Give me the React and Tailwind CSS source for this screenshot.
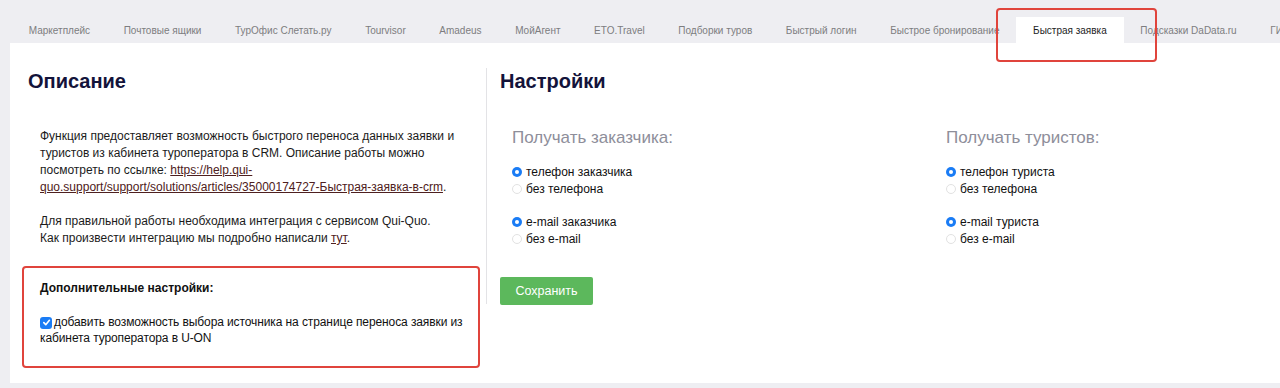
import React from "react";

const tabs = [
  { t: "Маркетплейс" },
  { t: "Почтовые ящики" },
  { t: "ТурОфис Слетать.ру" },
  { t: "Tourvisor" },
  { t: "Amadeus" },
  { t: "МойАгент" },
  { t: "ETO.Travel" },
  { t: "Подборки туров" },
  { t: "Быстрый логин" },
  { t: "Быстрое бронирование" },
  { t: "Быстрая заявка", active: true },
  { t: "Подсказки DaData.ru" },
  { t: "ГИБДД" },
];

function Radio({ checked, label }) {
  return (
    <div className="flex items-center h-[17px]">
      {checked ? (
        <span className="w-[10px] h-[10px] rounded-full bg-[#1a7cf5] flex items-center justify-center mr-[4px]">
          <span className="w-[4px] h-[4px] rounded-full bg-white" />
        </span>
      ) : (
        <span className="w-[10px] h-[10px] rounded-full border border-[#e2e2e2] bg-white mr-[4px]" />
      )}
      <span>{label}</span>
    </div>
  );
}

function Group({ title, a, b, c, d }) {
  return (
    <div className="w-[434px]">
      <div className="text-[17px] leading-[20px] text-[#8e8e9a] h-[20px]">{title}</div>
      <div className="mt-[15px] text-[12px] text-[#111]">
        <Radio checked label={a} />
        <Radio label={b} />
        <div className="h-[16px]" />
        <Radio checked label={c} />
        <Radio label={d} />
      </div>
    </div>
  );
}

export default function App() {
  return (
    <div
      className="relative w-[1280px] h-[388px] overflow-hidden bg-[#eeeef2]"
      style={{ fontFamily: '"Liberation Sans", Arial, sans-serif' }}
    >
      {/* tabs */}
      <div className="flex pt-[17px] pl-[12px] whitespace-nowrap">
        {tabs.map((tb) => (
          <div
            key={tb.t}
            className={`shrink-0 h-[26px] px-[16.8px] flex items-center text-[10px] ${
              tb.active ? "bg-white text-[#1d1d1d]" : "text-[#7d7d80]"
            }`}
          >
            {tb.t}
          </div>
        ))}
      </div>

      {/* panel */}
      <div className="ml-[10px] h-[340px] bg-white flex">
        {/* left */}
        <div className="w-[476px] shrink-0">
          <div className="pt-[26px] pl-[18px] text-[20px] leading-[24px] font-bold text-[#13133a]">
            Описание
          </div>
          <div className="mt-[35px] pl-[30px] pr-[30px] text-[12px] leading-[17px] text-[#1b1b1b]">
            <p>
              Функция предоставляет возможность быстрого переноса данных заявки и туристов из кабинета
              туроператора в CRM. Описание работы можно посмотреть по ссылке:{" "}
              <a className="text-[#4e2020] underline" href="#">
                https://help.qui-quo.support/support/solutions/articles/35000174727-Быстрая-заявка-в-crm
              </a>
              .
            </p>
            <p className="mt-[17px]">
              Для правильной работы необходима интеграция с сервисом Qui-Quo.
              <br />
              Как произвести интеграцию мы подробно написали{" "}
              <a className="text-[#4e2020] underline" href="#">
                тут
              </a>
              .
            </p>
          </div>
          <div className="mt-[19px] ml-[12px] w-[458px] h-[102px] border-2 border-[#e0443c] rounded-[4px] pl-[16px] pr-[0px] pt-[12px] text-[12px] leading-[16px] text-[#111]">
            <div className="font-bold h-[16px]">Дополнительные настройки:</div>
            <div className="mt-[18px] tracking-[-0.1px]">
              <span className="inline-flex align-[-1px] w-[12px] h-[12px] rounded-[3px] bg-[#1a7cf5] items-center justify-center mr-[2px]">
                <svg width="9" height="9" viewBox="0 0 10 10">
                  <path d="M2 5.2 L4.2 7.4 L8.2 2.6" stroke="white" strokeWidth="1.8" fill="none" strokeLinecap="round" strokeLinejoin="round" />
                </svg>
              </span>
              добавить возможность выбора источника на странице переноса заявки из кабинета
              туроператора в U-ON
            </div>
          </div>
        </div>

        {/* right */}
        <div className="mt-[25px] self-start border-l border-[#e3e3e6] pl-[13px] h-[236px] flex-1">
          <div className="text-[20px] leading-[24px] font-bold text-[#13133a] pt-[1px]">Настройки</div>
          <div className="mt-[35px] pl-[12px] flex">
            <Group
              title="Получать заказчика:"
              a="телефон заказчика"
              b="без телефона"
              c="e-mail заказчика"
              d="без e-mail"
            />
            <Group
              title="Получать туристов:"
              a="телефон туриста"
              b="без телефона"
              c="e-mail туриста"
              d="без e-mail"
            />
          </div>
          <button className="mt-[30px] w-[93px] h-[28px] rounded-[2px] bg-[#5cb85c] text-white text-[12.5px]">
            Сохранить
          </button>
        </div>
      </div>

      {/* highlight overlay */}
      <div className="absolute left-[996px] top-[8px] w-[161px] h-[54px] border-2 border-[#e0443c] rounded-[4px] pointer-events-none" />
    </div>
  );
}
